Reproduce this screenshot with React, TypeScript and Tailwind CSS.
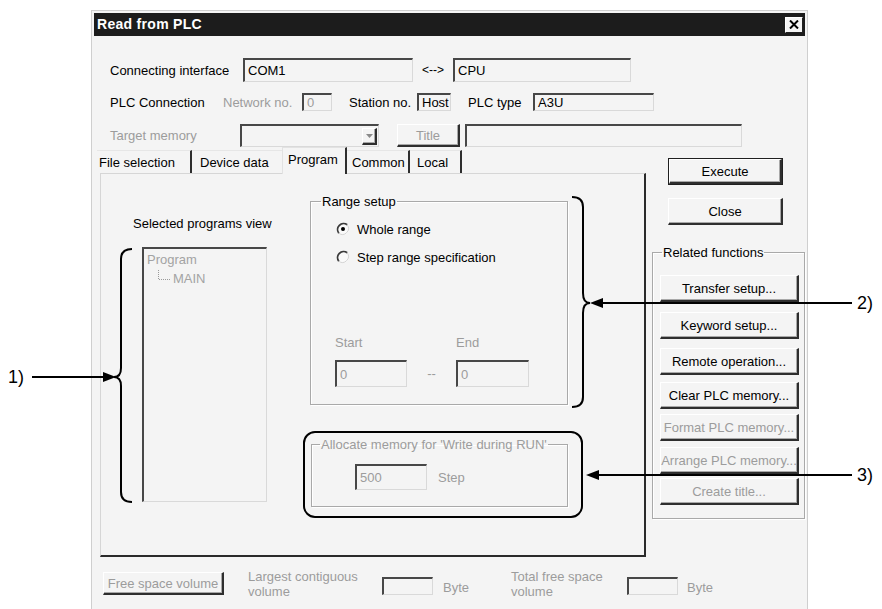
import React from "react";

const GRAY = "text-[#9c9c9c]";
const sunken =
  "flex items-center pl-[3px] border-t-2 border-l-2 border-t-[#474747] border-l-[#474747] border-r border-b border-r-[#d9d9d9] border-b-[#d9d9d9] bg-[#f4f4f4] whitespace-nowrap overflow-hidden";
const raised =
  "flex items-center justify-center border-t border-l border-t-white border-l-white border-r-2 border-b-2 border-r-[#2e2e2e] border-b-[#2e2e2e] bg-[#f4f4f4] whitespace-nowrap shadow-[inset_-1px_-1px_0_#a8a8a8]";
const etched = "border border-[#a9a9a9] shadow-[1px_1px_0_#ffffff,inset_1px_1px_0_#ffffff]";

function Field({ className, children, gray }: { className: string; children?: React.ReactNode; gray?: boolean }) {
  return <div className={`${sunken} ${className} ${gray ? GRAY : "text-black"}`}>{children}</div>;
}

function Btn({ className, children, gray }: { className: string; children: React.ReactNode; gray?: boolean }) {
  return <div className={`${raised} ${className} ${gray ? GRAY : "text-black"}`}>{children}</div>;
}

function Radio({ checked }: { checked?: boolean }) {
  return (
    <svg width="14" height="14" viewBox="0 0 14 14">
      <circle cx="7" cy="7" r="6" fill="#fafafa" />
      <path d="M2.8 11.2 A6 6 0 0 1 11.2 2.8" stroke="#3a3a3a" strokeWidth="1.8" fill="none" />
      <path d="M11.2 2.8 A6 6 0 0 1 2.8 11.2" stroke="#d4d4d4" strokeWidth="1" fill="none" />
      {checked && <circle cx="7" cy="7" r="2" fill="#000" />}
    </svg>
  );
}

export default function App() {
  return (
    <div className="relative w-[882px] h-[609px] overflow-hidden bg-white font-['Liberation_Sans',Arial,sans-serif] text-[13px] leading-[15px] text-black">
      {/* Dialog */}
      <div className="ml-[91px] mt-[10px] w-[717px] h-[620px] border border-[#cfcfcf] p-[2px] bg-[#f4f4f4]">
        {/* Title bar */}
        <div className="h-[23px] flex items-center justify-between pl-[3px] pr-[2px] bg-[#1c1c1c]">
          <span className="text-white font-bold text-[14px] tracking-[0.3px]">Read from PLC</span>
          <div className="w-[18px] h-[16px] flex items-center justify-center bg-[#f4f4f4] border-t border-l border-t-white border-l-white border-r border-b border-r-[#202020] border-b-[#202020]">
            <svg width="10" height="9" viewBox="0 0 10 9">
              <path d="M1 0.5 L9 8.5 M9 0.5 L1 8.5" stroke="#000" strokeWidth="2" />
            </svg>
          </div>
        </div>

        {/* Row 1 */}
        <div className="mt-[22px] h-[24px] flex items-center">
          <div className="ml-[16px] w-[133px]">Connecting interface</div>
          <Field className="w-[170px] h-full">COM1</Field>
          <div className="w-[40px] text-center text-[12px]">{"<-->"}</div>
          <Field className="w-[178px] h-full">CPU</Field>
        </div>

        {/* Row 2 */}
        <div className="mt-[11px] h-[18px] flex items-center">
          <div className="ml-[16px] w-[113px]">PLC Connection</div>
          <div className={`w-[79px] ${GRAY}`}>Network no.</div>
          <Field className="w-[30px] h-full" gray>0</Field>
          <div className="ml-[17px] w-[68px]">Station no.</div>
          <Field className="w-[34px] h-full pl-[1px]">Host</Field>
          <div className="ml-[17px] w-[65px]">PLC type</div>
          <Field className="w-[121px] h-full">A3U</Field>
        </div>

        {/* Row 3 */}
        <div className="mt-[13px] h-[23px] flex items-center">
          <div className={`ml-[16px] w-[130px] ${GRAY}`}>Target memory</div>
          <div className={`${sunken} w-[139px] h-full justify-end pr-[1px]`}>
            <div className={`${raised} w-[15px] h-[17px]`}>
              <svg width="7" height="4" viewBox="0 0 7 4">
                <path d="M0 0 L7 0 L3.5 4 Z" fill="#8a8a8a" />
              </svg>
            </div>
          </div>
          <Btn className="ml-[18px] w-[63px] h-full" gray>Title</Btn>
          <Field className="ml-[5px] w-[277px] h-full" />
        </div>

        {/* Main area */}
        <div className="flex items-start">
          {/* Tabs + panel */}
          <div className="ml-[3px] w-[549px] flex flex-col">
            <div className="h-[26px] flex items-end">
              <div className="w-[95px] h-[23px] pl-[2px] flex items-center border-t border-t-[#e6e6e6] border-r-2 border-r-[#2e2e2e]">File selection</div>
              <div className="w-[90px] h-[23px] pl-[8px] flex items-center border-t border-t-[#e6e6e6]">Device data</div>
              <div className="relative z-10 -mb-px w-[65px] h-[27px] pl-[5px] pb-[4px] flex items-center bg-[#f4f4f4] border-t border-l border-t-[#e2e2e2] border-l-[#e2e2e2] border-r-2 border-r-[#2e2e2e]">Program</div>
              <div className="w-[63px] h-[23px] pl-[5px] flex items-center border-t border-t-[#e6e6e6] border-r-2 border-r-[#2e2e2e]">Common</div>
              <div className="w-[52px] h-[23px] pl-[7px] flex items-center border-t border-t-[#e6e6e6] border-r-2 border-r-[#2e2e2e]">Local</div>
            </div>
            <div className="ml-[3px] w-[546px] h-[384px] flex border-t border-l border-t-[#d6d6d6] border-l-[#d6d6d6] border-r-2 border-b-2 border-r-[#2a2a2a] border-b-[#2a2a2a]">
              {/* Left column */}
              <div className="w-[202px] flex flex-col">
                <div className="ml-[32px] mt-[42px] whitespace-nowrap">Selected programs view</div>
                <div className="ml-[41px] mt-[16px] w-[125px] h-[255px] pt-[1px] pl-[3px] border-t-2 border-l-2 border-t-[#474747] border-l-[#474747] border-r border-b border-r-[#d9d9d9] border-b-[#d9d9d9] text-[#a3a3a3]">
                  <div className="h-[19px] flex items-center">Program</div>
                  <div className="h-[19px] flex items-center">
                    <svg width="14" height="19" viewBox="0 0 14 19" className="ml-[10px]">
                      <path d="M1.5 1 L1.5 10.5 L13 10.5" stroke="#9a9a9a" strokeWidth="1" strokeDasharray="1 1" fill="none" />
                    </svg>
                    <span className="ml-[2px]">MAIN</span>
                  </div>
                </div>
              </div>

              {/* Middle column */}
              <div className="w-[282px] flex flex-col">
                <fieldset className={`ml-[7px] mt-[20px] w-[258px] h-[211px] ${etched}`}>
                  <legend className="ml-[10px] px-[1px]">Range setup</legend>
                  <div className="ml-[25px] mt-[11px] h-[18px] flex items-center">
                    <Radio checked />
                    <span className="ml-[7px]">Whole range</span>
                  </div>
                  <div className="ml-[25px] mt-[10px] h-[18px] flex items-center">
                    <Radio />
                    <span className="ml-[7px]">Step range specification</span>
                  </div>
                  <div className="ml-[24px] mt-[69px] flex items-end">
                    <div className="w-[72px] flex flex-col">
                      <div className={`h-[16px] ${GRAY}`}>Start</div>
                      <Field className="mt-[9px] w-[72px] h-[27px]" gray>0</Field>
                    </div>
                    <div className={`w-[49px] h-[27px] flex items-center justify-center ${GRAY}`}>--</div>
                    <div className="w-[73px] flex flex-col">
                      <div className={`h-[16px] ${GRAY}`}>End</div>
                      <Field className="mt-[9px] w-[73px] h-[27px]" gray>0</Field>
                    </div>
                  </div>
                </fieldset>

                <div className="mt-[26px] w-[280px] h-[87px] border-2 border-black rounded-[12px]">
                  <fieldset className={`ml-[6px] mt-[4px] w-[257px] h-[70px] ${etched}`}>
                    <legend className={`ml-[8px] px-[1px] ${GRAY}`}>Allocate memory for 'Write during RUN'</legend>
                    <div className="ml-[43px] mt-[12px] h-[26px] flex items-center">
                      <Field className="w-[72px] h-full" gray>500</Field>
                      <span className={`ml-[11px] ${GRAY}`}>Step</span>
                    </div>
                  </fieldset>
                </div>
              </div>
            </div>
          </div>

          {/* Right column */}
          <div className="ml-[6px] w-[153px] flex flex-col">
            <div className="mt-[11px] ml-[16px] w-[115px] h-[27px] border border-[#202020]">
              <Btn className="w-full h-full">Execute</Btn>
            </div>
            <Btn className="mt-[13px] ml-[16px] w-[115px] h-[27px]">Close</Btn>
            <fieldset className={`mt-[20px] w-[153px] h-[274px] ${etched}`}>
              <legend className="ml-[9px] px-[1px]">Related functions</legend>
              <div className="ml-[7px] flex flex-col">
                <Btn className="mt-[15px] w-[139px] h-[27px]">Transfer setup...</Btn>
                <Btn className="mt-[10px] w-[139px] h-[27px]">Keyword setup...</Btn>
                <Btn className="mt-[9px] w-[139px] h-[27px]">Remote operation...</Btn>
                <Btn className="mt-[7px] w-[139px] h-[27px]">Clear PLC memory...</Btn>
                <Btn className="mt-[5px] w-[139px] h-[27px]" gray>Format PLC memory...</Btn>
                <Btn className="mt-[6px] w-[139px] h-[27px]" gray>Arrange PLC memory...</Btn>
                <Btn className="mt-[4px] w-[139px] h-[27px]" gray>Create title...</Btn>
              </div>
            </fieldset>
          </div>
        </div>

        {/* Bottom row */}
        <div className="mt-[15px] flex items-start">
          <Btn className="ml-[9px] w-[121px] h-[23px]" gray>Free space volume</Btn>
          <div className={`ml-[24px] w-[134px] -mt-[3px] ${GRAY}`}>
            <div>Largest contiguous</div>
            <div>volume</div>
          </div>
          <Field className="mt-[5px] w-[51px] h-[18px]" />
          <div className={`ml-[10px] w-[68px] mt-[8px] ${GRAY}`}>Byte</div>
          <div className={`w-[116px] -mt-[3px] ${GRAY}`}>
            <div>Total free space</div>
            <div>volume</div>
          </div>
          <Field className="mt-[5px] w-[51px] h-[18px]" />
          <div className={`ml-[9px] mt-[8px] ${GRAY}`}>Byte</div>
        </div>
      </div>

      {/* Annotation overlay */}
      <svg className="absolute left-0 top-0 pointer-events-none" width="882" height="609" viewBox="0 0 882 609">
        <g stroke="#000" strokeWidth="2" fill="none">
          <path d="M132 249 Q121 249 121 259 L121 368 Q121 377 114 377 Q121 377 121 386 L121 492 Q121 502 132 502" />
          <path d="M572 197 Q583 197 583 207 L583 293 Q583 303 590 303 Q583 303 583 313 L583 397 Q583 407 572 407" />
          <path d="M32 377 L104 377" />
          <path d="M602 303 L852 303" />
          <path d="M598 475 L852 475" />
        </g>
        <polygon points="116,377 103,372 103,382" fill="#000" />
        <polygon points="590,303 603,298 603,308" fill="#000" />
        <polygon points="586,475 599,470 599,480" fill="#000" />
      </svg>
      <div className="absolute left-[8px] top-[367px] text-[18px] leading-[20px]">1)</div>
      <div className="absolute left-[857px] top-[293px] text-[18px] leading-[20px]">2)</div>
      <div className="absolute left-[857px] top-[465px] text-[18px] leading-[20px]">3)</div>
    </div>
  );
}
